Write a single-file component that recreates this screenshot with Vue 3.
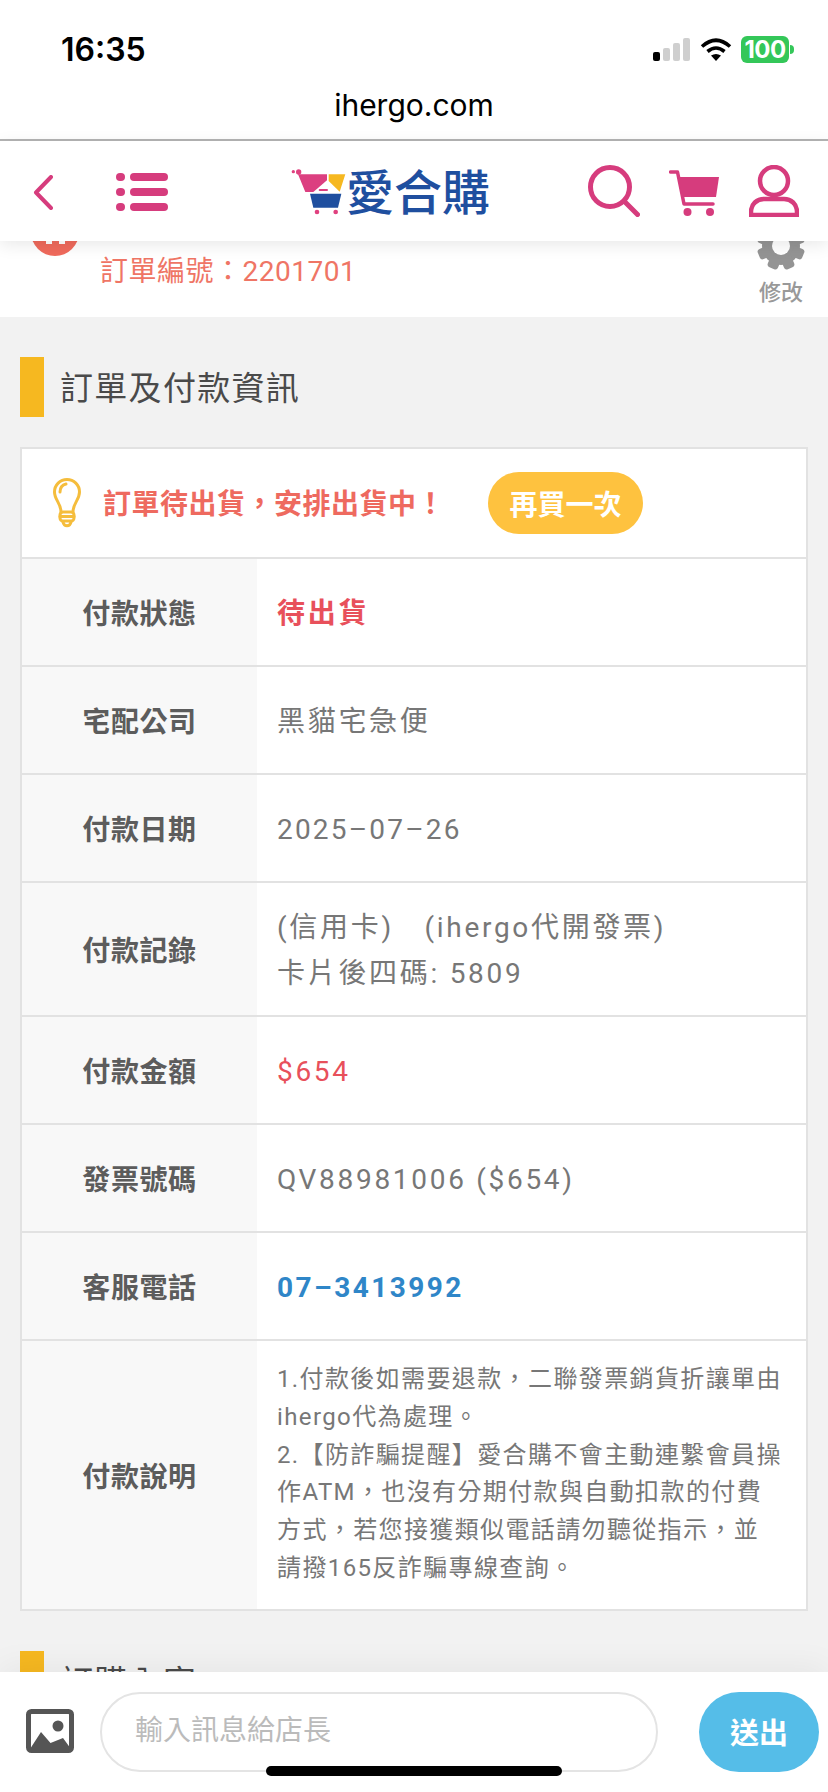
<script setup>
const rows = [
  { label: '付款狀態', value: '待出貨', cls: 'status' },
  { label: '宅配公司', value: '黑貓宅急便' },
  { label: '付款日期', value: '2025–07–26', cls: 'date' },
  { label: '付款記錄', lines: ['(信用卡)\u3000(ihergo代開發票)', '卡片後四碼: 5809'], cls: 'double' },
  { label: '付款金額', value: '$654', cls: 'price' },
  { label: '發票號碼', value: 'QV88981006 ($654)' },
  { label: '客服電話', value: '07–3413992', cls: 'phone' },
]
const noteLines = [
  '1.付款後如需要退款，二聯發票銷貨折讓單由',
  'ihergo代為處理。',
  '2.【防詐騙提醒】愛合購不會主動連繫會員操',
  '作ATM，也沒有分期付款與自動扣款的付費',
  '方式，若您接獲類似電話請勿聽從指示，並',
  '請撥165反詐騙專線查詢。',
]
const teeth = [0, 45, 90, 135, 180, 225, 270, 315]
</script>

<template>
  <div class="page">
    <div class="status-bar">
      <span class="time">16:35</span>
      <div class="indicators">
        <div class="signal">
          <i class="on s1"></i><i class="s2"></i><i class="s3"></i><i class="s4"></i>
        </div>
        <svg class="wifi" width="32" height="24" viewBox="0 0 32 24">
          <path d="M2 9.5Q16-3 30 9.5M7.5 14.5Q16 7.5 24.5 14.5" fill="none" stroke="#000" stroke-width="3.6" />
          <path d="M11 18.6Q16 15.4 21 18.6L16 24Z" fill="#000" />
        </svg>
        <div class="battery"><span>100</span></div>
        <i class="battery-tip"></i>
      </div>
    </div>
    <div class="url-bar">ihergo.com</div>

    <header class="nav">
      <svg class="back" width="20" height="35" viewBox="0 0 20 35">
        <path d="M18 2 3 17.5 18 33" fill="none" stroke="#d63c7d" stroke-width="4" stroke-linecap="round" stroke-linejoin="round" />
      </svg>
      <svg class="menu" width="52" height="38" viewBox="0 0 52 38">
        <g fill="#d63c7d">
          <rect x="0" y="0" width="9" height="8" rx="4" /><rect x="14" y="0" width="38" height="8" rx="4" />
          <rect x="0" y="15" width="9" height="8" rx="4" /><rect x="14" y="15" width="38" height="8" rx="4" />
          <rect x="0" y="30" width="9" height="8" rx="4" /><rect x="14" y="30" width="38" height="8" rx="4" />
        </g>
      </svg>
      <div class="logo">
        <svg width="60" height="60" viewBox="0 0 180 180">
          <circle cx="32" cy="33" r="8" fill="#e0417f" />
          <circle cx="16" cy="32" r="5" fill="#e0417f" />
          <path d="M30 40H117V58L76 93H52Z" fill="#dc3f80" />
          <path d="M122 40H172L155 92 122 60Z" fill="#f6b820" />
          <rect x="92" y="84" width="28" height="6" rx="3" fill="#dc3f80" />
          <path d="M66 98H160L150 140H76Z" fill="#1f4f9f" />
          <circle cx="87" cy="153" r="7" fill="#e0417f" />
          <circle cx="143" cy="153" r="7" fill="#e0417f" />
        </svg>
        <span class="logo-text">愛合購</span>
      </div>
      <svg class="search" width="52" height="52" viewBox="0 0 52 52">
        <circle cx="22" cy="22" r="19.5" fill="none" stroke="#d63c7d" stroke-width="5" />
        <path d="M36 36 49.5 49.5" stroke="#d63c7d" stroke-width="5" stroke-linecap="round" />
      </svg>
      <svg class="cart" width="50" height="47" viewBox="0 0 50 47">
        <path d="M1.5 2H8.5L15 34H44" fill="none" stroke="#d63c7d" stroke-width="3.5" stroke-linecap="round" stroke-linejoin="round" />
        <path d="M9 7H50L47 27H13Z" fill="#d63c7d" />
        <circle cx="18.500" cy="42" r="4" fill="#d63c7d" />
        <circle cx="41" cy="42" r="4" fill="#d63c7d" />
      </svg>
      <svg class="user" width="50" height="52" viewBox="0 0 50 52">
        <circle cx="25" cy="16" r="14" fill="none" stroke="#d63c7d" stroke-width="4.500" />
        <path d="M2 50V47C2 39 8 34 15 34H35C42 34 48 39 48 47V50Z" fill="none" stroke="#d63c7d" stroke-width="4.500" />
      </svg>
    </header>

    <main class="scroll">
      <section class="order-card">
        <div class="order-badge">
          <i></i><i></i>
        </div>
        <p class="order-no">訂單編號：2201701</p>
        <div class="edit">
          <svg width="48" height="48" viewBox="0 0 48 48">
            <g fill="#949494">
              <circle cx="24" cy="24" r="19" />
              <rect v-for="t in teeth" :key="t" x="18.500" y="0" width="11" height="12" rx="3" :transform="`rotate(${t + 22.5} 24 24)`" />
            </g>
            <circle cx="24" cy="24" r="9" fill="#fff" />
          </svg>
          <span>修改</span>
        </div>
      </section>

      <h2 class="section-title"><i></i><span>訂單及付款資訊</span></h2>

      <div class="table">
        <div class="alert">
          <svg width="28" height="51" viewBox="0 0 28 51">
            <g fill="none" stroke="#f5bd3c" stroke-width="3" stroke-linecap="round" stroke-linejoin="round">
              <path d="M8 34C8 25 1.500 22 1.500 14A12.500 12.500 0 0 1 26.500 14C26.500 22 20 25 20 34" />
              <path d="M7 14C7 10 9 7 13 6" />
              <rect x="7" y="34" width="14" height="9" rx="3" />
              <path d="M7 38.500H21M10 44C11 49 17 49 18 44" />
            </g>
          </svg>
          <span class="alert-text">訂單待出貨，安排出貨中！</span>
          <button class="buy-again" type="button">再買一次</button>
        </div>

        <div v-for="r in rows" :key="r.label" class="row" :class="r.cls">
          <div class="label">{{ r.label }}</div>
          <div class="value">
            <template v-if="r.lines">
              <div v-for="l in r.lines" :key="l">{{ l }}</div>
            </template>
            <template v-else>{{ r.value }}</template>
          </div>
        </div>

        <div class="row note">
          <div class="label">付款說明</div>
          <div class="value">
            <div v-for="l in noteLines" :key="l">{{ l }}</div>
          </div>
        </div>
      </div>

      <h2 class="section-title"><i></i><span>訂購內容</span></h2>
    </main>

    <footer class="composer">
      <svg class="pic" width="48" height="44" viewBox="0 0 48 44">
        <rect x="2.500" y="2.500" width="43" height="39" rx="3" fill="#fff" stroke="#555" stroke-width="5" />
        <circle cx="32" cy="17" r="5.500" fill="#555" />
        <path d="M4 40 15 23 24.500 34 37 29 45 40Z" fill="#555" />
      </svg>
      <div class="input">輸入訊息給店長</div>
      <button class="send" type="button">送出</button>
      <i class="home"></i>
    </footer>
  </div>
</template>

<style scoped>
.page {
  position: relative;
  width: 828px;
  height: 1792px;
  overflow: hidden;
  display: flex;
  flex-direction: column;
  background: #f2f2f2;
  font-family: Roboto, "Noto Sans CJK TC", sans-serif;
  color: #777;
}
.status-bar {
  height: 88px;
  flex: none;
  background: #fff;
  display: flex;
  align-items: center;
  justify-content: space-between;
  padding: 12px 34px 0 61px;
  box-sizing: border-box;
}
.time {
  font-family: Inter, sans-serif;
  font-weight: 600;
  font-size: 32px;
  color: #000;
  position: relative;
  top: -1px;
}
.indicators {
  display: flex;
  align-items: center;
  position: relative;
  top: -1px;
}
.signal {
  display: flex;
  align-items: flex-end;
  gap: 3px;
  height: 23px;
}
.signal i {
  width: 7px;
  background: #cfcfcf;
  border-radius: 2px;
}
.signal .on { background: #000; }
.s1 { height: 9px; }
.s2 { height: 13px; }
.s3 { height: 18px; }
.s4 { height: 23px; }
.wifi { margin-left: 10px; }
.battery {
  margin-left: 9px;
  width: 48px;
  height: 27px;
  background: #34c759;
  border-radius: 6px;
  display: flex;
  align-items: center;
  justify-content: center;
  color: #fff;
  font-family: Inter, sans-serif;
  font-weight: 700;
  font-size: 24px;
  letter-spacing: -0.5px;
}
.battery-tip {
  margin-left: 1px;
  width: 4px;
  height: 9px;
  background: #34c759;
  border-radius: 0 4px 4px 0;
}
.url-bar {
  height: 53px;
  flex: none;
  background: #fff;
  border-bottom: 2px solid #b4b4b4;
  box-sizing: border-box;
  text-align: center;
  line-height: 35px;
  font-family: Inter, sans-serif;
  font-size: 30px;
  color: #000;
}
.nav {
  position: relative;
  z-index: 2;
  flex: none;
  height: 100px;
  background: #fff;
  box-shadow: 0 4px 16px rgba(0, 0, 0, 0.09);
  display: flex;
  align-items: center;
}
.back { margin-left: 33px; position: relative; top: 1px; }
.menu { margin-left: 63px; position: relative; top: 1px; }
.logo { margin-left: 120px; display: flex; align-items: center; width: 204px; }
.logo-text {
  margin-left: -2px;
  font-family: "Noto Sans CJK TC", sans-serif;
  font-weight: 500;
  font-size: 48px;
  line-height: 1;
  color: #1f4f9f;
  white-space: nowrap;
  position: relative;
  top: -2px;
}
.search { margin-left: 96px; }
.cart { margin-left: 29px; position: relative; top: 2px; }
.user { margin-left: 30px; }

.scroll {
  flex: 1;
  min-height: 0;
  overflow: hidden;
}
.order-card {
  height: 109px;
  margin-top: -33px;
  background: #fff;
  display: flex;
  align-items: flex-start;
  position: relative;
}
.order-badge {
  width: 48px;
  height: 48px;
  margin-left: 31px;
  border-radius: 50%;
  background: #f06a5c;
  display: flex;
  justify-content: center;
  gap: 7px;
  padding-top: 30px;
  box-sizing: border-box;
}
.order-badge i {
  width: 6px;
  height: 6px;
  background: #fff;
}
.order-no {
  margin: 44px 0 0 21px;
  font-size: 28px;
  line-height: 40px;
  letter-spacing: 0.5px;
  color: #ef7565;
}
.edit {
  margin-left: auto;
  margin-right: 23px;
  margin-top: 14px;
  display: flex;
  flex-direction: column;
  align-items: center;
  color: #999;
  font-size: 22px;
  font-weight: 500;
  line-height: 30px;
}
.edit svg { display: block; margin-bottom: 8px; }

.section-title {
  margin: 40px 0 30px 20px;
  display: flex;
  align-items: center;
  gap: 16px;
  height: 60px;
  font-weight: 400;
  font-size: 33px;
  letter-spacing: 1.3px;
  color: #4a4a4a;
}
.section-title i {
  width: 24px;
  height: 60px;
  background: #f6b820;
}
.section-title span { margin-bottom: 2px; }

.table {
  margin: 0 20px;
  border: 2px solid #e2e2e2;
  background: #fff;
}
.alert {
  height: 108px;
  display: flex;
  align-items: center;
  padding-left: 31px;
  box-sizing: border-box;
}
.alert svg { flex: none; }
.alert-text {
  margin-left: 22px;
  font-size: 28px;
  font-weight: 700;
  letter-spacing: 0.5px;
  color: #ee6a5f;
  width: 385px;
  position: relative;
  top: -1px;
}
.buy-again {
  width: 155px;
  height: 62px;
  border: none;
  padding: 0;
  border-radius: 31px;
  background: #fec23f;
  color: #fff;
  font-family: inherit;
  font-size: 28px;
  font-weight: 700;
}
.row {
  display: grid;
  grid-template-columns: 235px 1fr;
  border-top: 2px solid #e2e2e2;
  height: 108px;
  box-sizing: border-box;
}
.row.double { height: 134px; }
.row.note { height: 270px; }
.label {
  background: #f8f8f8;
  display: flex;
  align-items: center;
  justify-content: center;
  font-size: 28px;
  font-weight: 700;
  letter-spacing: 0.6px;
  color: #5c5c5c;
}
.value {
  display: flex;
  flex-direction: column;
  justify-content: center;
  align-items: flex-start;
  padding: 4px 0 0 20px;
  font-size: 28px;
  letter-spacing: 2.7px;
  line-height: 46px;
  color: #777;
  white-space: nowrap;
}
.date .value { letter-spacing: 2.2px; }
.status .value { color: #e8505b; font-weight: 700; }
.price .value { color: #e8505b; }
.phone .value { color: #2f86c8; font-weight: 700; letter-spacing: 2.45px; }
.note .value {
  display: block;
  padding: 20px 0 0 20px;
  font-size: 24px;
  letter-spacing: 1.38px;
  line-height: 37.8px;
}

.composer {
  position: relative;
  z-index: 2;
  flex: none;
  height: 120px;
  background: #fff;
  box-shadow: 0 -6px 30px rgba(0, 0, 0, 0.05);
  display: flex;
  align-items: flex-start;
  padding-top: 20px;
  box-sizing: border-box;
}
.pic { margin: 17px 0 0 26px; flex: none; }
.input {
  margin-left: 26px;
  width: 558px;
  height: 80px;
  box-sizing: border-box;
  border: 2px solid #e4e4e4;
  border-radius: 40px;
  padding-left: 33px;
  line-height: 74px;
  font-size: 28px;
  color: #bbb;
}
.send {
  margin-left: 41px;
  width: 120px;
  height: 80px;
  border: none;
  padding: 0 0 3px;
  border-radius: 40px;
  background: #55bde8;
  color: #fff;
  font-family: inherit;
  font-size: 29px;
  font-weight: 700;
}
.home {
  position: absolute;
  left: 266px;
  bottom: 16px;
  width: 296px;
  height: 10px;
  border-radius: 5px;
  background: #000;
}
</style>

<style>
html, body { margin: 0; padding: 0; background: #fff; }
</style>
